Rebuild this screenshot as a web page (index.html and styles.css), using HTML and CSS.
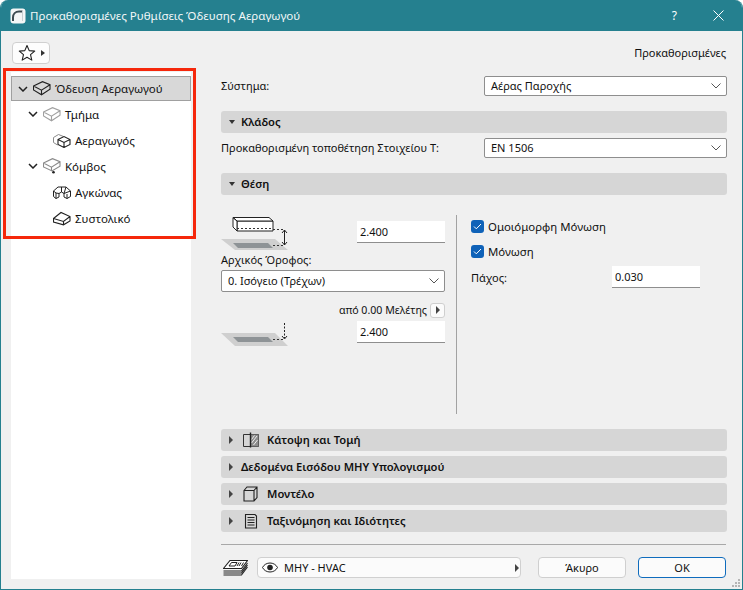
FILE: index.html
```html
<!DOCTYPE html>
<html lang="el">
<head>
<meta charset="utf-8">
<title>Προκαθορισμένες Ρυθμίσεις Όδευσης Αεραγωγού</title>
<link rel="stylesheet" href="styles.css">
</head>
<body>
<div class="dialog">
  <header class="titlebar">
    <svg class="app-icon" width="16" height="16" viewBox="0 0 16 16"><rect x="0.5" y="0.5" width="15" height="15" rx="3" fill="#f4f6f6"/><path d="M3 13V9.500C3 6 5.500 3.500 9 3.500h3.500" fill="none" stroke="#3c4a50" stroke-width="2"/><path d="M12.500 3v10" stroke="#c9d0d2" stroke-width="1"/></svg>
    <span class="title">Προκαθορισμένες Ρυθμίσεις Όδευσης Αεραγωγού</span>
    <span class="help">?</span>
    <svg class="close" width="11" height="11" viewBox="0 0 11 11"><path d="M0.500 0.500l10 10M10.500 0.500l-10 10" stroke="#fff" stroke-width="1" fill="none"/></svg>
  </header>
  <div class="content">
    <aside class="left">
      <button class="fav">
        <svg width="18" height="18" viewBox="0 0 18 18"><path d="M9 1.500l2.200 5.100 5.500.5-4.200 3.600 1.300 5.400L9 13.200 4.200 16.100l1.300-5.400L1.300 7.100l5.500-.5z" fill="#fff" stroke="#222" stroke-width="1.100" stroke-linejoin="round"/></svg>
        <span class="tri-right small"></span>
      </button>
      <nav class="tree">
        <div class="node selected">
          <svg class="chev" width="10" height="6" viewBox="0 0 10 6"><path d="M1 1l4 4 4-4" fill="none" stroke="#222" stroke-width="1.500"/></svg>
          <svg class="ticon" width="18" height="15" viewBox="0 0 18 15"><path d="M.5 5L9.500.7l7.500 3v4.500L8.500 13.800.5 9zM.5 5l8 4.200L17 3.700M8.500 9.200v4.600" fill="none" stroke="#222" stroke-width="1.100"/></svg>
          <span>Όδευση Αεραγωγού</span>
        </div>
        <div class="node lvl1">
          <svg class="chev" width="10" height="6" viewBox="0 0 10 6"><path d="M1 1l4 4 4-4" fill="none" stroke="#222" stroke-width="1.500"/></svg>
          <svg class="ticon" width="18" height="15" viewBox="0 0 18 15"><path d="M.5 5L9.500.7l7.500 3v4.500L8.500 13.800.5 9zM.5 5l8 4.200L17 3.700M8.500 9.200v4.600" fill="none" stroke="#a0a0a0" stroke-width="1.100"/></svg>
          <span>Τμήμα</span>
        </div>
        <div class="node lvl2">
          <svg class="ticon" width="18" height="15" viewBox="0 0 18 15"><path d="M.5 4.500L5.500 1.500l5 2M.5 4.500v5l4 2.500" fill="none" stroke="#8a8a8a"/><path d="M5 6.500l6-3 6 3v5l-6 3-6-3zM5 6.500l6 3 6-3M11 9.500v5" fill="none" stroke="#222" stroke-width="1.100"/></svg>
          <span>Αεραγωγός</span>
        </div>
        <div class="node lvl1">
          <svg class="chev" width="10" height="6" viewBox="0 0 10 6"><path d="M1 1l4 4 4-4" fill="none" stroke="#222" stroke-width="1.500"/></svg>
          <svg class="ticon" width="18" height="16" viewBox="0 0 18 16"><path d="M.5 5L9.500.7l7.500 3v4.500L9 13 .5 9zM.5 5l8 4.200L17 3.700M8.500 9.200V13" fill="none" stroke="#8a8a8a" stroke-width="1.100"/><circle cx="10.500" cy="14.300" r="1.300" fill="#222"/></svg>
          <span>Κόμβος</span>
        </div>
        <div class="node lvl2">
          <svg class="ticon" width="18" height="15" viewBox="0 0 18 15"><path d="M.5 6L5 2h8l4.500 4v5.500l-3.500 2-3-1.500V8.500L8.500 7 6 8.500V12l-3 1.500-2.500-2zM.5 6L3 8v5.500M6 8.500L3 8M8.500 2v5M13 2l-2 6.500M11 8.500L17.500 6M14 9v4.500" fill="none" stroke="#222" stroke-width="1"/></svg>
          <span>Αγκώνας</span>
        </div>
        <div class="node lvl2">
          <svg class="ticon" width="18" height="15" viewBox="0 0 18 15"><path d="M.5 7.500L8 1.500l9 4v4.500l-6.500 3.800L.5 11zM.5 7.500l10 3L17 5.500M10.500 10.500v3.800" fill="none" stroke="#222" stroke-width="1.100"/></svg>
          <span>Συστολικό</span>
        </div>
      </nav>
    </aside>
    <main class="main">
      <div class="preset">Προκαθορισμένες</div>
      <div class="row">
        <label>Σύστημα:</label>
        <div class="select wide"><span>Αέρας Παροχής</span><svg class="sel-chev" width="10" height="6" viewBox="0 0 10 6"><path d="M0.500 0.500L5 5l4.500-4.500" fill="none" stroke="#555"/></svg></div>
      </div>
      <div class="section s-klados"><span class="tri-down"></span><b>Κλάδος</b></div>
      <div class="row second">
        <label>Προκαθορισμένη τοποθέτηση Στοιχείου Τ:</label>
        <div class="select wide"><span>EN 1506</span><svg class="sel-chev" width="10" height="6" viewBox="0 0 10 6"><path d="M0.500 0.500L5 5l4.500-4.500" fill="none" stroke="#555"/></svg></div>
      </div>
      <div class="section s-thesi"><span class="tri-down"></span><b>Θέση</b></div>
      <div class="thesi">
        <div class="col-a">
          <div class="pic-row top">
            <svg width="68" height="34" viewBox="0 0 68 34"><path d="M0 22h54l13 11H14z" fill="#cfcfcf"/><path d="M12 26h35l5 5H17z" fill="#8e9396"/><path d="M16 4h36v10H16z" fill="#fff" stroke="#222"/><path d="M12 .5h36L52 4H16zM12 .5V10l4 4V4z" fill="#fff" stroke="#222"/><path d="M16 11.500h36M52 12.500h10M52 28.500h10" stroke="#333" stroke-dasharray="2 2" fill="none"/><path d="M63.500 13v15M61 16l2.500-3 2.500 3M61 25l2.500 3 2.500-3" stroke="#222" fill="none"/></svg>
            <input class="num" value="2.400" readonly>
          </div>
          <div class="floor-label">Αρχικός Όροφος:</div>
          <div class="select floor"><span>0. Ισόγειο (Τρέχων)</span><svg class="sel-chev" width="10" height="6" viewBox="0 0 10 6"><path d="M0.500 0.500L5 5l4.500-4.500" fill="none" stroke="#555"/></svg></div>
          <div class="from"><span>από 0.00 Μελέτης</span><button class="mini"><span class="tri-right"></span></button></div>
          <div class="pic-row bottom">
            <svg width="68" height="23" viewBox="0 0 68 23"><path d="M0 10h54l13 13H14z" fill="#cfcfcf"/><path d="M12 14h35l5 5H17z" fill="#8e9396"/><path d="M63.500 0v15" stroke="#222" stroke-dasharray="2 1.500"/><path d="M61 13l2.500 3 2.500-3" fill="none" stroke="#222"/><path d="M52 16.500h10" stroke="#333" stroke-dasharray="2 2"/></svg>
            <input class="num" value="2.400" readonly>
          </div>
        </div>
        <div class="col-b">
          <div class="check"><span class="box"><svg width="9" height="7" viewBox="0 0 9 7"><path d="M1 3.500l2.300 2.300L8 1" fill="none" stroke="#fff"/></svg></span><span class="lbl">Ομοιόμορφη Μόνωση</span></div>
          <div class="check c2"><span class="box"><svg width="9" height="7" viewBox="0 0 9 7"><path d="M1 3.500l2.300 2.300L8 1" fill="none" stroke="#fff"/></svg></span><span class="lbl">Μόνωση</span></div>
          <div class="thick"><span class="lbl">Πάχος:</span><input class="num" value="0.030" readonly></div>
        </div>
      </div>
      <div class="section closed"><span class="tri-right"></span>
        <svg class="sec-icon" width="18" height="18" viewBox="0 0 18 18"><path d="M2.500 3.500h15v12h-15z" fill="none" stroke="#333"/><path d="M10 3.500h7.500v12H10z" fill="#8d8d8d"/><path d="M10.500 12l5.500-7M10.500 8.500l3-4M12.500 14l4-5" stroke="#eee"/><path d="M9.500 1.500v15" stroke="#222" stroke-width="1.400"/></svg>
        <b>Κάτοψη και Τομή</b></div>
      <div class="section closed"><span class="tri-right"></span><b>Δεδομένα Εισόδου ΜΗΥ Υπολογισμού</b></div>
      <div class="section closed"><span class="tri-right"></span>
        <svg class="sec-icon" width="18" height="18" viewBox="0 0 18 18"><path d="M3 5.500l3-3.500h10v10.500l-3 3.500H3zM3 5.500h10V16M13 5.500L16 2" fill="none" stroke="#222" stroke-width="1.100"/></svg>
        <b>Μοντέλο</b></div>
      <div class="section closed"><span class="tri-right"></span>
        <svg class="sec-icon" width="18" height="18" viewBox="0 0 18 18"><path d="M4.500 2.500h9.500l1.500 1.500v12h-11z" fill="none" stroke="#222" stroke-width="1.100"/><path d="M6.500 5.500h7M6.500 8h7M6.500 10.500h7M6.500 13h7" stroke="#222"/></svg>
        <b>Ταξινόμηση και Ιδιότητες</b></div>
      <div class="rule"></div>
      <footer class="footer">
        <svg class="layers" width="25" height="16" viewBox="0 0 25 16"><path d="M7 .5h17.500l-6 8H.5z" fill="#fff" stroke="#222" stroke-width="1.100"/><path d="M.5 11h18l6-8M.5 13h18l6-8M.5 15h18l6-8" fill="none" stroke="#222" stroke-width="1.100"/><path d="M8.500 2.500h5.500l-2 3.500H6zM16 2.500l-2 3.500M18 2.500l-2 3.500M20.500 2.500l-2 3.500" fill="none" stroke="#222"/></svg>
        <div class="layer-sel">
          <svg width="16" height="11" viewBox="0 0 16 11"><path d="M.5 5.500c3-6 12-6 15 0-3 6-12 6-15 0z" fill="#fff" stroke="#222"/><circle cx="8" cy="5.500" r="2.800" fill="#222"/></svg>
          <span class="lay-name">ΜΗΥ - HVAC</span>
          <span class="tri-right end"></span>
        </div>
        <button class="btn cancel">Άκυρο</button>
        <button class="btn ok">OK</button>
      </footer>
    </main>
  </div>
  <div class="annot"></div>
  <svg class="grip" width="8" height="8" viewBox="0 0 8 8"><path d="M6 0h2v2H6zM3 3h2v2H3zM6 3h2v2H6zM0 6h2v2H0zM3 6h2v2H3zM6 6h2v2H6z" fill="#b5b5b5"/></svg>
</div>
</body>
</html>
```
FILE: styles.css
```css
* { box-sizing: border-box; }
html, body { margin: 0; padding: 0; height: 100%; background: #fff; }
body { font: 11.5px "Noto Sans", "Open Sans", sans-serif; color: #111; overflow: hidden; }
.dialog { position: relative; width: 743px; height: 590px; display: flex; flex-direction: column; background: #f0f0f0; border: 1px solid #25808f; border-top: 0; border-radius: 8px 8px 0 0; overflow: hidden; }
.titlebar { height: 31px; flex: none; background: #25808f; color: #fff; display: flex; align-items: center; padding: 0 0 0 9px; }
.app-icon { margin-right: 4px; }
.title { flex: 1; font-size: 11.6px; color: #f2f7f8; }
.help { font-size: 12px; margin-right: 36px; }
.close { margin-right: 18px; }
.content { flex: 1; display: flex; min-height: 0; }
.left { width: 220px; flex: none; padding: 11px 0 10px 10px; display: flex; flex-direction: column; }
.fav { width: 38px; height: 22px; margin-left: 1px; padding: 0 0 0 5px; background: #fdfdfd; border: 1px solid #d0d0d0; border-radius: 4px; display: flex; align-items: center; gap: 5px; }
.tree { margin-top: 8px; width: 180px; flex: 1; background: #fff; padding-top: 4px; }
.node { height: 26px; display: flex; align-items: center; padding-left: 7px; }
.node svg.chev { flex: none; margin-right: 5px; }
.node .ticon { flex: none; margin-right: 4px; }
.node.selected { height: 25px; background: #d8d8d8; border: 1px solid #a0a0a0; padding-left: 6px; }
.lvl1 { padding-left: 17px; }
.lvl2 { padding-left: 42px; }
.main { width: 506px; flex: none; display: flex; flex-direction: column; font-size: 11px; }
.preset { height: 45px; padding: 14px 1px 0 0; text-align: right; line-height: 16px; }
.row { height: 20px; display: flex; align-items: center; justify-content: space-between; }
.row label { padding-bottom: 1px; }
.select { height: 20px; background: #fff; border: 1px solid #8e8e8e; border-radius: 2px; display: flex; align-items: center; justify-content: space-between; padding: 0 5px 0 6px; }
.select.wide { width: 243px; }
.select span { padding-bottom: 2px; }
.sel-chev { flex: none; }
.section { height: 22px; background: #d6d6d6; border-radius: 3px; display: flex; align-items: center; padding-left: 8px; }
.section b { font-weight: 600; font-size: 11.2px; padding-bottom: 2px; }
.s-klados { margin-top: 15px; }
.s-klados b, .s-thesi b { margin-left: 6px; }
.second { margin-top: 5px; }
.s-thesi { margin-top: 15px; }
.tri-down { width: 0; height: 0; border-left: 3.500px solid transparent; border-right: 3.500px solid transparent; border-top: 4px solid #333; flex: none; }
.tri-right { display: inline-block; width: 0; height: 0; border-top: 4px solid transparent; border-bottom: 4px solid transparent; border-left: 4px solid #444; flex: none; }
.tri-right.small { border-top-width: 3.500px; border-bottom-width: 3.500px; border-left-color: #333; }
.thesi { height: 234px; display: flex; }
.col-a { width: 224px; flex: none; display: flex; flex-direction: column; padding-top: 22px; }
.pic-row { display: flex; justify-content: space-between; align-items: flex-start; }
.pic-row.top { height: 35px; }
.pic-row.top .num { margin-top: 4px; }
.num { width: 88px; height: 22px; border: 0; border-bottom: 1px solid #8e8e8e; background: #fff; font: inherit; color: #111; padding: 0 3px; outline: none; }
.floor-label { height: 18px; line-height: 16px; }
.select.floor { height: 22px; }
.from { height: 29px; display: flex; align-items: center; justify-content: flex-end; gap: 3px; padding-top: 7px; font-size: 10.6px; }
.from > span { padding-bottom: 1px; }
.mini { width: 15px; height: 15px; padding: 0 0 0 5px; background: #fbfbfb; border: 1px solid #cfcfcf; border-radius: 3px; display: flex; align-items: center; }
.pic-row.bottom { height: 22px; }
.pic-row.bottom svg { margin-top: 2px; }
.col-b { margin: 20px 0 0 11px; border-left: 1px solid #a2a2a2; height: 199px; padding: 5px 0 0 14px; }
.check { height: 13px; display: flex; align-items: center; gap: 4px; font-size: 11.4px; }
.check .lbl { padding-bottom: 1px; }
.check.c2 { margin-top: 12px; }
.box { width: 13px; height: 13px; background: #0f62b8; border-radius: 3px; display: flex; align-items: center; justify-content: center; flex: none; }
.thick { display: flex; align-items: center; justify-content: space-between; width: 229px; margin-top: 8px; }
.closed { margin-bottom: 5px; }
.closed .tri-right { margin-right: 8px; }
.sec-icon { margin-right: 8px; flex: none; }
.rule { height: 1px; background: #a8a8a8; margin: 7px 1px 0 0; }
.footer { height: 34px; display: flex; align-items: flex-start; padding: 12px 1px 0 2px; }
.layers { margin-top: 3px; }
.layer-sel { width: 264px; height: 21px; margin-left: 9px; background: #fbfbfb; border: 1px solid #d0d0d0; border-radius: 4px; display: flex; align-items: center; padding: 0 0 0 4px; gap: 6px; }
.lay-name { padding-bottom: 1px; }
.layer-sel .end { margin-left: auto; margin-right: 1px; }
.btn { width: 88px; height: 21px; font: inherit; color: #111; background: #fbfbfb; border: 1px solid #cfcfcf; border-radius: 4px; padding: 0; }
.cancel { margin-left: 17px; }
.ok { margin-left: 12px; border-color: #0f6cbd; }
.annot { position: absolute; left: 2px; top: 68px; width: 193px; height: 171px; border: 3px solid #f5270b; pointer-events: none; }
.grip { position: absolute; right: 2px; bottom: 2px; }
```
